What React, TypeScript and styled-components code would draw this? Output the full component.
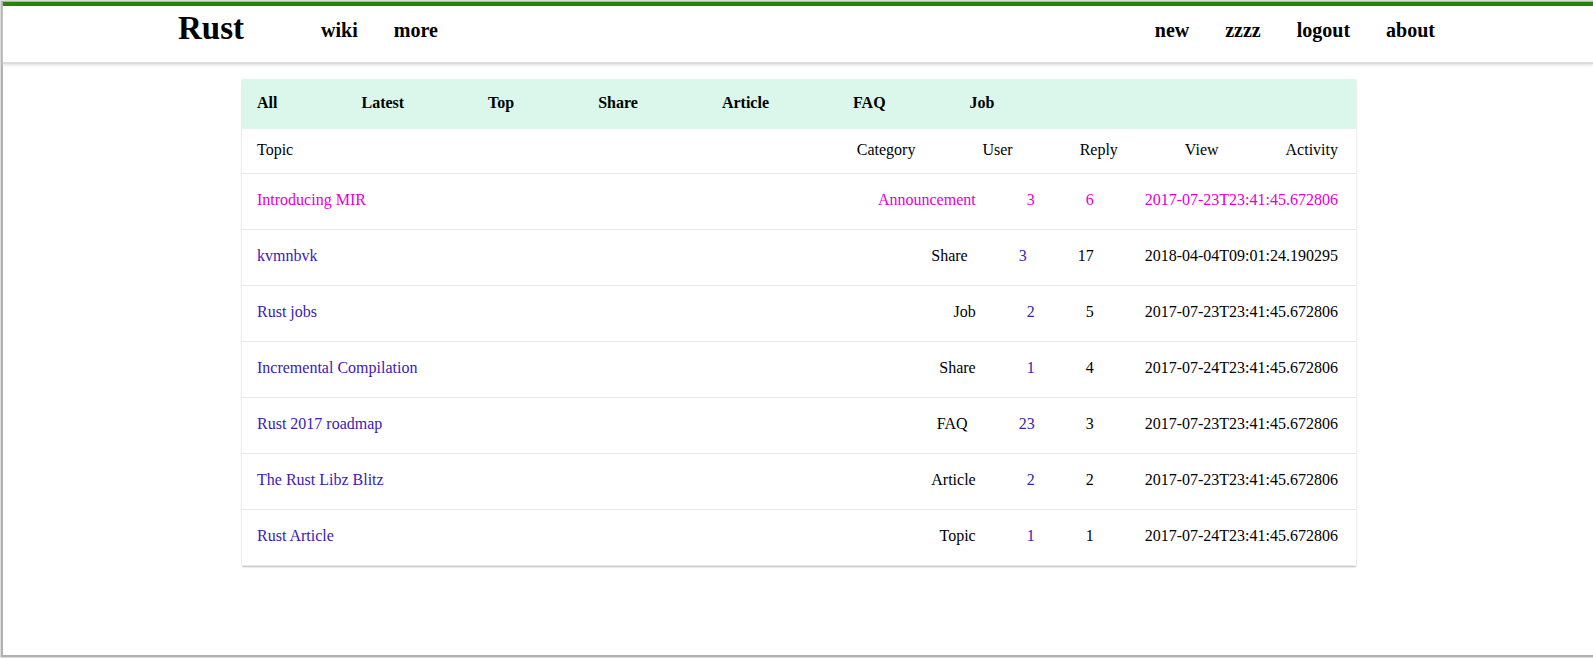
import React from "react";
import styled, { createGlobalStyle } from "styled-components";

const GlobalStyle = createGlobalStyle`
  *, *::before, *::after { box-sizing: border-box; }
  body {
    margin: 0;
    background: #fff;
    color: #000;
    font-family: "Liberation Serif", "Times New Roman", serif;
    font-size: 16px;
    line-height: 18px;
  }
  a { color: inherit; text-decoration: none; }
`;

const Frame = styled.div`
  min-height: 100vh;
  display: flex;
  flex-direction: column;
  background: #eee;
  padding-bottom: 1px;
`;

const Page = styled.div`
  flex: 1;
  background: #fff;
  border-style: solid;
  border-color: #b0b0b0;
  border-width: 1px 0 2px 2px;
  outline: 1px solid #dcdcdc;
  margin: 1px 0 0 1px;
`;

const Header = styled.header`
  display: flex;
  align-items: flex-start;
  height: 60px;
  padding: 0 158px 0 175px;
  border-top: 4px solid #268505;
  box-shadow: 0 3px 3px #d9dddb, 0 2px 0 #d9dddb;
`;

const Brand = styled.a`
  margin-top: 4px;
  font-size: 33px;
  line-height: 37px;
  font-weight: bold;
`;

const Nav = styled.nav<{ $end?: boolean }>`
  display: flex;
  gap: 36px;
  margin-top: 13px;
  margin-left: ${(p) => (p.$end ? "auto" : "77px")};
  font-size: 20px;
  line-height: 23px;
  font-weight: bold;
`;

const Card = styled.main`
  margin: 17px 237px 0 239px;
  border-bottom: 1px solid #e9e9e9;
  border-radius: 1px;
  overflow: hidden;
  box-shadow: 0 1px 2px rgba(0, 0, 0, 0.28);
`;

const Tabs = styled.nav`
  display: flex;
  gap: 84px;
  height: 50px;
  padding: 15px;
  background: #dbf7eb;
  font-weight: bold;
`;

const Topics = styled.table`
  display: block;
  & > thead, & > tbody { display: block; }
`;

const HeadRow = styled.tr`
  display: flex;
  gap: 67px;
  padding: 12px 18px 14px 15px;
`;

const Row = styled.tr<{ $pinned?: boolean }>`
  display: flex;
  gap: 51px;
  padding: 17px 18px 20px 15px;
  border-top: 1px solid #e9e9e9;
  color: ${(p) => (p.$pinned ? "#e000d0" : "#000")};
  & a { color: ${(p) => (p.$pinned ? "#e000d0" : "#3b20b4")}; }
`;

const Cell = styled.td`
  padding: 0;
  &:first-child { flex: 1; }
`;

const HeadCell = styled.th`
  padding: 0;
  font-weight: normal;
  text-align: left;
  &:first-child { flex: 1; }
`;

const tabs = ["All", "Latest", "Top", "Share", "Article", "FAQ", "Job"];
const columns = ["Topic", "Category", "User", "Reply", "View", "Activity"];

const topics = [
  { title: "Introducing MIR", category: "Announcement", user: 3, views: 6, time: "2017-07-23T23:41:45.672806", pinned: true },
  { title: "kvmnbvk", category: "Share", user: 3, views: 17, time: "2018-04-04T09:01:24.190295" },
  { title: "Rust jobs", category: "Job", user: 2, views: 5, time: "2017-07-23T23:41:45.672806" },
  { title: "Incremental Compilation", category: "Share", user: 1, views: 4, time: "2017-07-24T23:41:45.672806" },
  { title: "Rust 2017 roadmap", category: "FAQ", user: 23, views: 3, time: "2017-07-23T23:41:45.672806" },
  { title: "The Rust Libz Blitz", category: "Article", user: 2, views: 2, time: "2017-07-23T23:41:45.672806" },
  { title: "Rust Article", category: "Topic", user: 1, views: 1, time: "2017-07-24T23:41:45.672806" },
];

export default function App() {
  return (
    <Frame>
      <GlobalStyle />
      <Page>
        <Header>
          <Brand href="#">Rust</Brand>
          <Nav>
            {["wiki", "more"].map((t) => <a href="#" key={t}>{t}</a>)}
          </Nav>
          <Nav $end>
            {["new", "zzzz", "logout", "about"].map((t) => <a href="#" key={t}>{t}</a>)}
          </Nav>
        </Header>
        <Card>
          <Tabs>
            {tabs.map((t) => <a href="#" key={t}>{t}</a>)}
          </Tabs>
          <Topics>
            <thead>
              <HeadRow>
                {columns.map((c) => <HeadCell scope="col" key={c}>{c}</HeadCell>)}
              </HeadRow>
            </thead>
            <tbody>
              {topics.map((t) => (
                <Row key={t.title} $pinned={t.pinned}>
                  <Cell><a href="#">{t.title}</a></Cell>
                  <Cell>{t.category}</Cell>
                  <Cell><a href="#">{t.user}</a></Cell>
                  <Cell>{t.views}</Cell>
                  <Cell>{t.time}</Cell>
                </Row>
              ))}
            </tbody>
          </Topics>
        </Card>
      </Page>
    </Frame>
  );
}
